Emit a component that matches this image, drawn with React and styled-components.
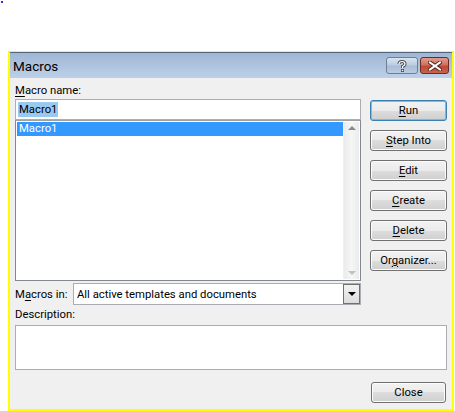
import React from "react";
import styled, { createGlobalStyle } from "styled-components";

const Global = createGlobalStyle`
  html, body { margin: 0; padding: 0; background: #ffffff; }
  body { font-family: Roboto, "Open Sans", sans-serif; font-size: 11.3px; color: #000; }
`;

const Page = styled.div`
  width: 455px;
  height: 411px;
  display: flex;
  flex-direction: column;
  padding: 1px 0 0 1px;
  box-sizing: border-box;
`;

const Dot = styled.div`
  width: 2px;
  height: 2px;
  background: #3030f0;
`;

const Frame = styled.div`
  margin: 48px 0 0 7px;
  width: 446px;
  height: 360px;
  box-sizing: border-box;
  border: 2px solid #ffff00;
  border-top-width: 1px;
  background: #f0f0f0;
  display: flex;
  flex-direction: column;
`;

const TitleBar = styled.div`
  height: 26px;
  border-top: 1px solid #55657a;
  background: linear-gradient(#9fb7d4, #bcd0e8);
  display: flex;
  align-items: center;
  padding: 0 3px 0 3px;
  box-sizing: border-box;
`;

const Title = styled.div`
  flex: 1;
  font-size: 13.5px;
  color: #000;
`;

const CapBtn = styled.div`
  width: ${(p) => p.$w}px;
  height: 17px;
  box-sizing: border-box;
  border: 1px solid ${(p) => (p.$red ? "#6d2a25" : "#6e7f92")};
  border-radius: 3px;
  background: ${(p) =>
    p.$red
      ? "linear-gradient(#e29a8d 0%, #d0735f 45%, #be4a35 55%, #c9624c 100%)"
      : "linear-gradient(#d9e4f1 0%, #bccde2 45%, #a9bdd6 55%, #b9cce3 100%)"};
  display: flex;
  align-items: center;
  justify-content: center;
  margin-left: 2px;
`;

const Body = styled.div`
  flex: 1;
  display: flex;
  flex-direction: column;
  padding: 5px 5px 6px 5px;
  box-sizing: border-box;
`;

const Top = styled.div`
  display: flex;
  gap: 9px;
`;

const LeftCol = styled.div`
  width: 346px;
  display: flex;
  flex-direction: column;
`;

const Label = styled.div`
  height: 16px;
  line-height: 16px;
`;

const U = styled.span`
  text-decoration: underline;
  text-underline-offset: 2px;
`;

const TextBox = styled.div`
  height: 21px;
  box-sizing: border-box;
  border: 1px solid #abadb3;
  background: #fff;
  display: flex;
  align-items: center;
  padding-left: 2px;
`;

const Sel = styled.span`
  background: #99c9ef;
  line-height: 15px;
  padding: 0 1px;
`;

const ListBox = styled.div`
  height: 161px;
  box-sizing: border-box;
  border: 1px solid #828790;
  border-top-color: #a0a0a0;
  background: #fff;
  display: flex;
  padding: 1px;
`;

const ListItems = styled.div`
  flex: 1;
`;

const ListRow = styled.div`
  height: 14px;
  line-height: 14px;
  background: #3399ff;
  color: #fff;
  padding-left: 2px;
`;

const VScroll = styled.div`
  width: 16px;
  background: linear-gradient(90deg, #ebebeb, #f6f6f6 50%, #ebebeb);
  border-left: 1px solid #f0f0f0;
  display: flex;
  flex-direction: column;
  justify-content: space-between;
  align-items: center;
  padding: 4px 0;
  box-sizing: border-box;
`;

const Arrow = styled.div`
  width: 0;
  height: 0;
  border-left: ${(p) => p.$s}px solid transparent;
  border-right: ${(p) => p.$s}px solid transparent;
  ${(p) => (p.$up ? "border-bottom" : "border-top")}: ${(p) => p.$s}px solid ${(p) => p.$c};
`;

const Buttons = styled.div`
  width: 77px;
  padding-top: 17px;
  display: flex;
  flex-direction: column;
  gap: 9px;
`;

const Btn = styled.div`
  width: ${(p) => p.$w || 77}px;
  height: 21px;
  box-sizing: border-box;
  border: 1px solid ${(p) => (p.$default ? "#3c7fb1" : "#707070")};
  border-radius: 3px;
  background: linear-gradient(#f2f2f2 0%, #ebebeb 50%, #dddddd 50%, #cfcfcf 100%);
  box-shadow: ${(p) => (p.$default ? "inset 0 0 0 1px #48d0f8" : "inset 0 0 0 1px #fcfcfc")};
  display: flex;
  align-items: center;
  justify-content: center;
  line-height: 1;
`;

const MacrosInRow = styled.div`
  display: flex;
  align-items: center;
  margin-top: 2px;
  height: 22px;
`;

const MacrosInLabel = styled.div`
  width: 58px;
`;

const Combo = styled.div`
  width: 288px;
  height: 22px;
  box-sizing: border-box;
  border: 1px solid #abadb3;
  background: #fff;
  display: flex;
  align-items: center;
  padding-left: 3px;
`;

const ComboText = styled.div`
  flex: 1;
`;

const DropBtn = styled.div`
  width: 17px;
  height: 20px;
  box-sizing: border-box;
  border: 1px solid #707070;
  background: linear-gradient(#f2f2f2, #dcdcdc);
  display: flex;
  align-items: center;
  justify-content: center;
`;

const DescLabel = styled.div`
  height: 16px;
  line-height: 16px;
  margin-top: 2px;
`;

const DescBox = styled.div`
  margin-top: 2px;
  height: 45px;
  box-sizing: border-box;
  border: 1px solid #abadb3;
  background: #fff;
`;

const Footer = styled.div`
  margin-top: auto;
  display: flex;
  justify-content: flex-end;
  padding-right: 1px;
`;

export default function App() {
  return (
    <>
      <Global />
      <Page>
        <Dot />
        <Frame>
          <TitleBar>
            <Title>Macros</Title>
            <CapBtn $w={32}>
              <svg width="10" height="12" viewBox="0 0 10 12">
                <path d="M2 4 Q2 1.5 5 1.5 Q8 1.5 8 4 Q8 5.5 5.5 6.5 L5.5 8" fill="none" stroke="#4a4a4a" strokeWidth="3" />
                <path d="M2 4 Q2 1.5 5 1.5 Q8 1.5 8 4 Q8 5.5 5.5 6.5 L5.5 8" fill="none" stroke="#fff" strokeWidth="1.2" />
                <rect x="4" y="9" width="3" height="3" fill="#4a4a4a" />
                <rect x="4.8" y="9.8" width="1.4" height="1.4" fill="#fff" />
              </svg>
            </CapBtn>
            <CapBtn $w={29} $red>
              <svg width="14" height="10" viewBox="0 0 14 10">
                <path d="M2 1.5 L12 8.5 M12 1.5 L2 8.5" stroke="#5a2a22" strokeWidth="4" strokeLinecap="square" />
                <path d="M2 1.5 L12 8.5 M12 1.5 L2 8.5" stroke="#fff" strokeWidth="2" strokeLinecap="square" />
              </svg>
            </CapBtn>
          </TitleBar>
          <Body>
            <Top>
              <LeftCol>
                <Label>
                  <U>M</U>acro name:
                </Label>
                <TextBox>
                  <Sel>Macro1</Sel>
                </TextBox>
                <ListBox>
                  <ListItems>
                    <ListRow>Macro1</ListRow>
                  </ListItems>
                  <VScroll>
                    <Arrow $up $s={4} $c="#8a8a8a" />
                    <Arrow $s={4} $c="#c0c0c0" />
                  </VScroll>
                </ListBox>
              </LeftCol>
              <Buttons>
                <Btn $default>
                  <span><U>R</U>un</span>
                </Btn>
                <Btn>
                  <span><U>S</U>tep Into</span>
                </Btn>
                <Btn>
                  <span><U>E</U>dit</span>
                </Btn>
                <Btn>
                  <span><U>C</U>reate</span>
                </Btn>
                <Btn>
                  <span><U>D</U>elete</span>
                </Btn>
                <Btn>
                  <span>Or<U>g</U>anizer...</span>
                </Btn>
              </Buttons>
            </Top>
            <MacrosInRow>
              <MacrosInLabel>
                M<U>a</U>cros in:
              </MacrosInLabel>
              <Combo>
                <ComboText>All active templates and documents</ComboText>
                <DropBtn>
                  <Arrow $s={4} $c="#000" />
                </DropBtn>
              </Combo>
            </MacrosInRow>
            <DescLabel>Description:</DescLabel>
            <DescBox />
            <Footer>
              <Btn $w={75}>Close</Btn>
            </Footer>
          </Body>
        </Frame>
      </Page>
    </>
  );
}
